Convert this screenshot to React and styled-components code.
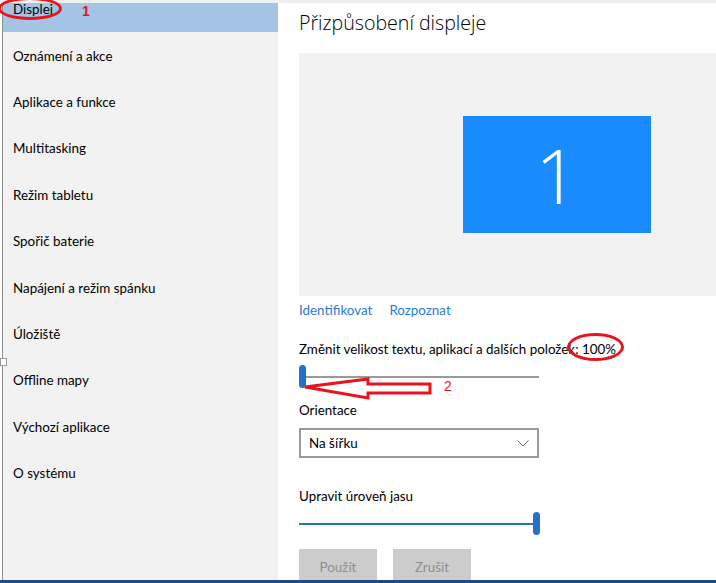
import styled, { createGlobalStyle } from 'styled-components';

const GlobalStyle = createGlobalStyle`
  html, body {
    margin: 0;
    padding: 0;
    background: #ffffff;
  }
  body {
    font-family: 'Segoe UI', Lato, 'Noto Sans', sans-serif;
    font-size: 13.4px;
    color: #000;
  }
`;

const Frame = styled.div`
  position: relative;
  width: 716px;
  height: 583px;
  display: flex;
  flex-direction: column;
  overflow: hidden;
  background: #fff;
`;

const TopStrip = styled.div`
  height: 3px;
  background: #f0f0f0;
  flex-shrink: 0;
`;

const BottomBar = styled.div`
  height: 3px;
  background: #1f4a86;
  flex-shrink: 0;
`;

const Body = styled.div`
  flex: 1;
  display: flex;
  min-height: 0;
  padding-left: 2px;
`;

const Sidebar = styled.nav`
  width: 275px;
  flex-shrink: 0;
  background: #f2f2f2;
  border-left: 1px solid #8c8c8c;
  overflow: hidden;
`;

const Handle = styled.div`
  position: absolute;
  width: 5px;
  height: 6px;
  background: #fff;
  border: 1px solid #9a9a9a;
`;

const NavList = styled.ul`
  list-style: none;
  margin: -17px 0 0 0;
  padding: 0;
`;

const NavItem = styled.li`
  height: 46.4px;
  display: flex;
  align-items: center;
  padding-left: 10px;
  line-height: 12px;
  background: ${(p) => (p.$active ? '#a4c4e5' : 'transparent')};
  color: #000;
`;

const Main = styled.main`
  flex: 1;
  padding-left: 21px;
  display: flex;
  flex-direction: column;
  overflow: hidden;

  & > * {
    flex-shrink: 0;
  }
`;

const Title = styled.h1`
  margin: 6px 0 0 0;
  font-family: 'Open Sans', 'Noto Sans', sans-serif;
  font-weight: 300;
  font-size: 19.6px;
  line-height: 28px;
  color: #000;
`;

const Preview = styled.div`
  margin-top: 16px;
  margin-right: -2px;
  height: 243px;
  background: #f2f2f2;
  display: flex;
  padding: 63px 0 0 164px;
  box-sizing: border-box;
`;

const Monitor = styled.div`
  width: 188px;
  height: 117px;
  background: #1a8cff;
  color: #fff;
  display: flex;
  align-items: center;
  justify-content: center;
  font-family: 'Open Sans', 'Noto Sans', sans-serif;
  font-weight: 300;
  font-size: 76px;
  line-height: 1;
`;

const Links = styled.div`
  display: flex;
  gap: 17px;
  margin-top: 4px;
  line-height: 20px;
`;

const Link = styled.a`
  color: #2b7cd3;
  cursor: pointer;
`;

const Label = styled.div`
  margin-top: ${(p) => p.$top}px;
  line-height: 20px;
`;

const Slider = styled.div`
  position: relative;
  width: 240px;
  height: 23px;
  margin-top: ${(p) => p.$top}px;
  display: flex;
  align-items: center;
`;

const Track = styled.div`
  height: 2px;
  width: 100%;
  background: ${(p) => (p.$filled ? '#2a70c8' : '#9a9a9a')};
`;

const Thumb = styled.div`
  position: absolute;
  top: 0;
  width: 7px;
  height: 23px;
  border-radius: 4px;
  background: #2371c8;
`;

const Select = styled.div`
  margin-top: 8px;
  width: 240px;
  height: 30px;
  box-sizing: border-box;
  border: 2px solid #999;
  display: flex;
  align-items: center;
  justify-content: space-between;
  padding: 0 8px 0 8px;
`;

const Buttons = styled.div`
  display: flex;
  gap: 16px;
  margin-top: 14px;
`;

const Button = styled.button`
  width: 78px;
  height: 36px;
  border: none;
  background: #cccccc;
  color: #8f8f8f;
  font-family: inherit;
  font-size: 13.4px;
  padding: 0;
`;

const Ellipse = styled.div`
  position: absolute;
  border: 3px solid #e8141c;
  border-radius: 50%;
  box-sizing: border-box;
  pointer-events: none;
`;

const Mark = styled.div`
  position: absolute;
  color: #e8141c;
  font-family: 'Liberation Sans', Arial, sans-serif;
  font-size: 14px;
  line-height: 14px;
`;

const Arrow = styled.svg`
  position: absolute;
  pointer-events: none;
`;

const items = [
  'Displej',
  'Oznámení a akce',
  'Aplikace a funkce',
  'Multitasking',
  'Režim tabletu',
  'Spořič baterie',
  'Napájení a režim spánku',
  'Úložiště',
  'Offline mapy',
  'Výchozí aplikace',
  'O systému',
];

function Chevron() {
  return (
    <svg width='12' height='7' viewBox='0 0 12 7'>
      <path d='M0.5 0.5 L6 6 L11.5 0.5' fill='none' stroke='#6d6d6d' strokeWidth='1' />
    </svg>
  );
}

export default function App() {
  return (
    <>
      <GlobalStyle />
      <Frame>
        <TopStrip />
        <Body>
          <Sidebar>
            <NavList>
              {items.map((t, i) => (
                <NavItem key={t} $active={i === 0}>
                  {t}
                </NavItem>
              ))}
            </NavList>
          </Sidebar>
          <Main>
            <Title>Přizpůsobení displeje</Title>
            <Preview>
              <Monitor>1</Monitor>
            </Preview>
            <Links>
              <Link>Identifikovat</Link>
              <Link>Rozpoznat</Link>
            </Links>
            <Label $top={19}>Změnit velikost textu, aplikací a dalších položek: 100%</Label>
            <Slider $top={6}>
              <Track />
              <Thumb style={{ left: 0 }} />
            </Slider>
            <Label $top={12}>Orientace</Label>
            <Select>
              <span>Na šířku</span>
              <Chevron />
            </Select>
            <Label $top={28}>Upravit úroveň jasu</Label>
            <Slider $top={6}>
              <Track $filled />
              <Thumb style={{ left: 234 }} />
            </Slider>
            <Buttons>
              <Button>Použít</Button>
              <Button>Zrušit</Button>
            </Buttons>
          </Main>
        </Body>
        <BottomBar />
        <Handle style={{ left: 0, top: 358 }} />
        <Ellipse style={{ left: -2, top: -3, width: 64, height: 23 }} />
        <Mark style={{ left: 82, top: 4, fontWeight: 700 }}>1</Mark>
        <Ellipse style={{ left: 567, top: 333, width: 57, height: 28 }} />
        <Arrow style={{ left: 300, top: 374 }} width='136' height='30' viewBox='0 0 136 30'>
          <path
            d='M5 13 L68 5 L68 10 L130 10 L130 19 L68 19 L68 24 Z'
            fill='#fff'
            stroke='#e8141c'
            strokeWidth='3'
            strokeLinejoin='miter'
          />
        </Arrow>
        <Mark style={{ left: 444, top: 379 }}>2</Mark>
      </Frame>
    </>
  );
}
